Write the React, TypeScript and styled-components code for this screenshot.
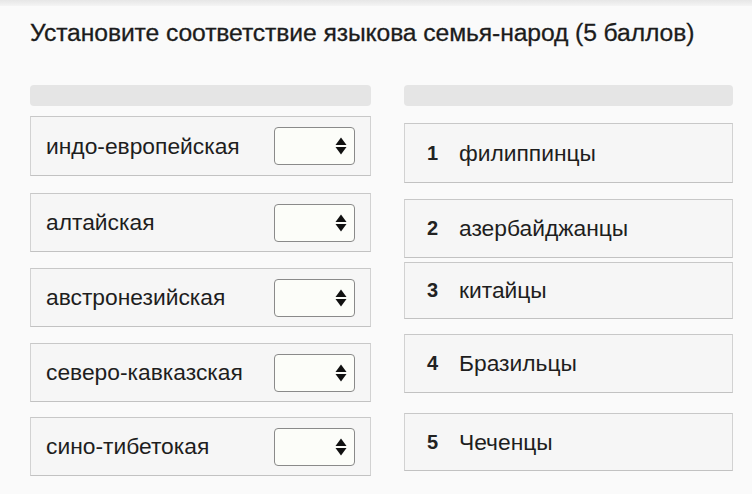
import React from "react";
import styled, { createGlobalStyle } from "styled-components";

const Global = createGlobalStyle`
  html, body { margin: 0; padding: 0; background: #fafafa; }
  body { font-family: "Liberation Sans", Arial, sans-serif; }
`;

const Page = styled.div`
  width: 752px;
  height: 494px;
  background: #fafafa;
  overflow: hidden;
  display: flex;
  flex-direction: column;
`;

const TopStrip = styled.div`
  height: 6px;
  background: linear-gradient(#e6e6e6, #f4f4f4);
`;

const Title = styled.h1`
  margin: 12px 0 0 30px;
  height: 30px;
  font-size: 24.7px;
  font-weight: normal;
  color: #1c1c1c;
  letter-spacing: -0.1px;
  line-height: 30px;
  white-space: nowrap;
  -webkit-text-stroke: 0.3px #1c1c1c;
`;

const Columns = styled.div`
  display: flex;
  gap: 33px;
  padding-left: 30px;
  margin-top: 37px;
`;

const Column = styled.div<{ $w: number }>`
  width: ${(p) => p.$w}px;
  display: flex;
  flex-direction: column;
`;

const HeaderBar = styled.div`
  height: 21px;
  background: #e5e5e5;
  border-radius: 4px;
`;

const Row = styled.div<{ $top: number; $h: number; $pad: number }>`
  margin-top: ${(p) => p.$top}px;
  height: ${(p) => p.$h}px;
  box-sizing: border-box;
  border: 1px solid #d2d2d2;
  border-top-color: #c8c8c8;
  border-bottom-color: #c2c2c2;
  background: #f6f6f6;
  display: flex;
  align-items: center;
  padding: 0 15px 0 ${(p) => p.$pad}px;
  font-size: 22.8px;
  color: #1e1e1e;
`;

const Label = styled.span`
  flex: 1;
  white-space: nowrap;
`;

const Select = styled.div`
  width: 81px;
  height: 38px;
  box-sizing: border-box;
  border: 1px solid #8a8a8a;
  border-radius: 4px;
  background: #fcfdf9;
  display: flex;
  align-items: center;
  justify-content: flex-end;
  padding-right: 7px;
`;

const Num = styled.span`
  width: 32px;
  font-weight: bold;
  font-size: 20px;
  color: #222;
`;

const Arrows = () => (
  <svg width="12" height="18" viewBox="0 0 12 18">
    <path d="M6 0.5 L11.5 8 L0.5 8 Z" fill="#111" />
    <path d="M6 17.5 L11.5 10 L0.5 10 Z" fill="#111" />
  </svg>
);

const left = [
  { t: "индо-европейская", top: 10, h: 60 },
  { t: "алтайская", top: 17, h: 59 },
  { t: "австронезийская", top: 16, h: 59 },
  { t: "северо-кавказская", top: 16, h: 59 },
  { t: "сино-тибетокая", top: 15, h: 59 },
];

const right = [
  { n: "1", t: "филиппинцы", top: 17, h: 60 },
  { n: "2", t: "азербайджанцы", top: 16, h: 59 },
  { n: "3", t: "китайцы", top: 4, h: 57 },
  { n: "4", t: "Бразильцы", top: 15, h: 59 },
  { n: "5", t: "Чеченцы", top: 20, h: 58 },
];

export default function App() {
  return (
    <Page>
      <Global />
      <TopStrip />
      <Title>Установите соответствие языкова семья-народ (5 баллов)</Title>
      <Columns>
        <Column $w={341}>
          <HeaderBar />
          {left.map((r) => (
            <Row key={r.t} $top={r.top} $h={r.h} $pad={15}>
              <Label>{r.t}</Label>
              <Select>
                <Arrows />
              </Select>
            </Row>
          ))}
        </Column>
        <Column $w={329}>
          <HeaderBar />
          {right.map((r) => (
            <Row key={r.n} $top={r.top} $h={r.h} $pad={22}>
              <Num>{r.n}</Num>
              <Label>{r.t}</Label>
            </Row>
          ))}
        </Column>
      </Columns>
    </Page>
  );
}
